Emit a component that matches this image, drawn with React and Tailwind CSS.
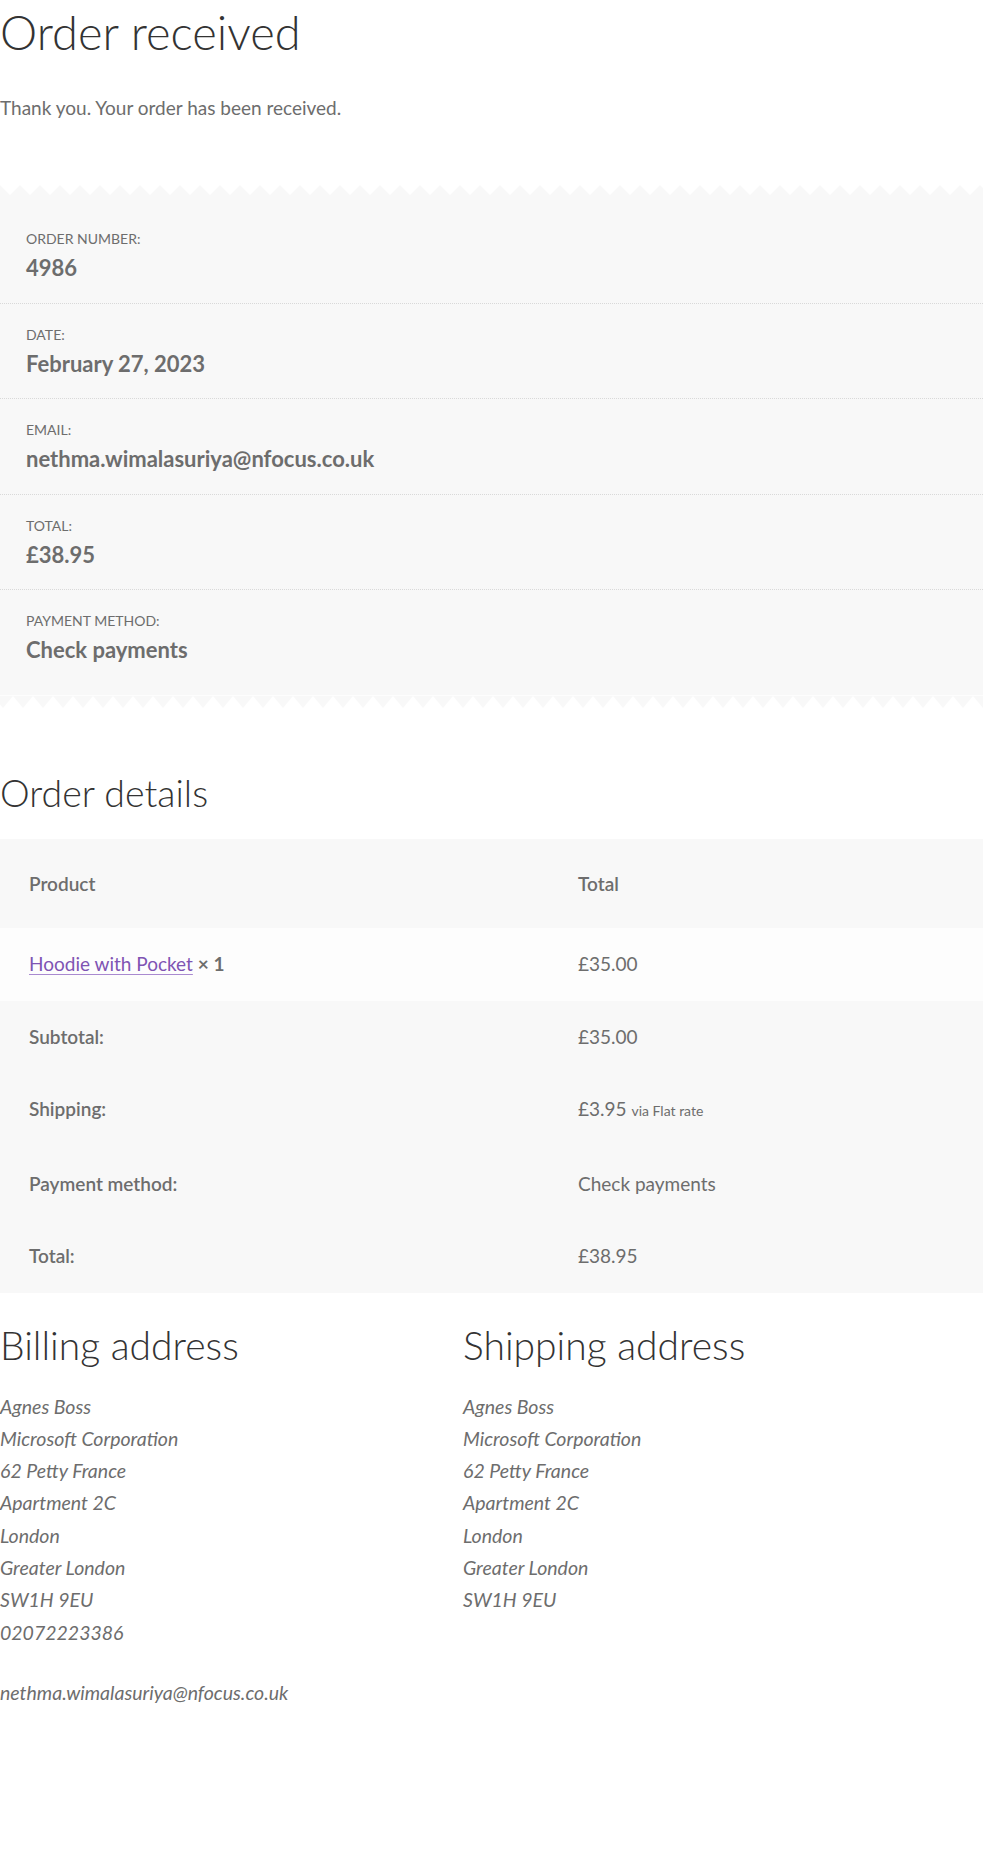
import React from "react";

const overview = [
  { label: "Order number:", value: "4986" },
  { label: "Date:", value: "February 27, 2023" },
  { label: "Email:", value: "nethma.wimalasuriya@nfocus.co.uk" },
  { label: "Total:", value: "£38.95" },
  { label: "Payment method:", value: "Check payments" },
];

const billing = [
  "Agnes Boss",
  "Microsoft Corporation",
  "62 Petty France",
  "Apartment 2C",
  "London",
  "Greater London",
  "SW1H 9EU",
  "02072223386",
];

const shipping = billing.slice(0, 7);

const ZigTop = () => (
  <svg className="block w-full h-[10px]" height="10">
    <defs>
      <pattern id="zz-top" width="20" height="10" patternUnits="userSpaceOnUse">
        <path d="M0 0L10 10L20 0V10H0Z" fill="#f8f8f8" />
      </pattern>
    </defs>
    <rect width="100%" height="10" fill="url(#zz-top)" />
  </svg>
);

const ZigBottom = () => (
  <svg className="block w-full h-[13px]" height="13">
    <defs>
      <pattern id="zz-bottom" x="-7" width="20" height="13" patternUnits="userSpaceOnUse">
        <path d="M0 1H20L10 13Z" fill="#f8f8f8" />
      </pattern>
    </defs>
    <rect width="100%" height="1" fill="#fdfdfd" />
    <rect width="100%" height="13" fill="url(#zz-bottom)" />
  </svg>
);

const App = () => {
  return (
    <div className="min-h-[1853px] bg-white font-['Lato',sans-serif] text-[#6d6d6d]">
      {/* Page title */}
      <h1 className="text-[47px] leading-[64px] font-light text-[#333333]">
        Order received
      </h1>
      <p className="mt-[28px] text-[19px] leading-[32px]">
        Thank you. Your order has been received.
      </p>

      {/* Order overview */}
      <div className="mt-[61px]">
        <ZigTop />
        <ul className="bg-[#f8f8f8] pt-[13px] pb-[10px]">
          {overview.map((item, index) => (
            <li
              key={item.label}
              className={`px-[26px] pt-[21px] pb-[19.5px] ${
                index < overview.length - 1
                  ? "border-b border-dotted border-[#d9d9d9]"
                  : ""
              }`}
            >
              <div className="text-[14px] leading-[20px] uppercase">
                {item.label}
              </div>
              <div className="mt-[4px] text-[22px] leading-[30px] font-bold">
                {item.value}
              </div>
            </li>
          ))}
        </ul>
        <ZigBottom />
      </div>

      {/* Order details */}
      <h2 className="mt-[60px] text-[37.5px] leading-[50px] font-light text-[#333333]">
        Order details
      </h2>
      <div className="mt-[21px] text-[19px] leading-[32px]">
        <div className="grid grid-cols-[549px_1fr] bg-[#f8f8f8] px-[29px] pt-[29px] pb-[28px] font-semibold">
          <div>Product</div>
          <div>Total</div>
        </div>
        <div className="grid grid-cols-[549px_1fr] bg-[#fdfdfd] px-[29px] py-[20.5px]">
          <div>
            <a
              href="#"
              className="text-[#7f54b3] underline decoration-[#a98ad0] underline-offset-[3px]"
            >
              Hoodie with Pocket
            </a>{" "}
            <strong className="font-bold">× 1</strong>
          </div>
          <div>£35.00</div>
        </div>
        <div className="bg-[#f8f8f8]">
          <div className="grid grid-cols-[549px_1fr] px-[29px] py-[20.25px]">
            <div className="font-semibold">Subtotal:</div>
            <div>£35.00</div>
          </div>
          <div className="grid grid-cols-[549px_1fr] px-[29px] py-[20.25px]">
            <div className="font-semibold">Shipping:</div>
            <div>
              £3.95 <small className="text-[14px]">via Flat rate</small>
            </div>
          </div>
          <div className="grid grid-cols-[549px_1fr] px-[29px] py-[20.25px]">
            <div className="font-semibold">Payment method:</div>
            <div>Check payments</div>
          </div>
          <div className="grid grid-cols-[549px_1fr] px-[29px] py-[20.25px]">
            <div className="font-semibold">Total:</div>
            <div>£38.95</div>
          </div>
        </div>
      </div>

      {/* Addresses */}
      <div className="mt-[27px] grid grid-cols-[463px_1fr]">
        <section>
          <h2 className="text-[39px] leading-[50px] font-light text-[#333333]">
            Billing address
          </h2>
          <address className="mt-[21px] text-[19.5px] leading-[32.3px] italic">
            {billing.map((line) => (
              <div key={line}>{line}</div>
            ))}
            <p className="mt-[27.7px]">nethma.wimalasuriya@nfocus.co.uk</p>
          </address>
        </section>
        <section>
          <h2 className="text-[39px] leading-[50px] font-light text-[#333333]">
            Shipping address
          </h2>
          <address className="mt-[21px] text-[19.5px] leading-[32.3px] italic">
            {shipping.map((line) => (
              <div key={line}>{line}</div>
            ))}
          </address>
        </section>
      </div>
    </div>
  );
};

export default App;
